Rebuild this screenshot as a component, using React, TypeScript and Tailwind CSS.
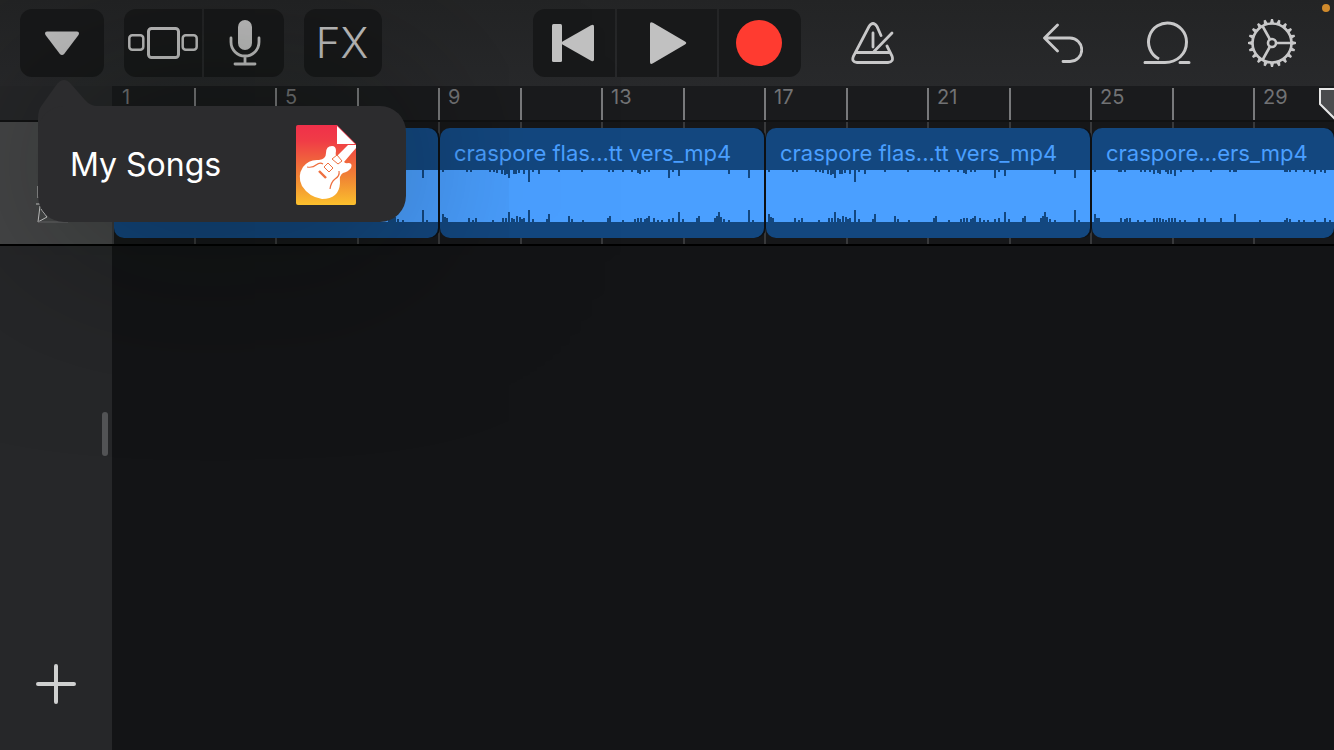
import type { ReactNode } from "react";

type Peak = [x: number, height: number];

type Clip = {
  name?: string;
  grow?: boolean;
  top: Peak[];
  bottom: Peak[];
};

const loopTop: Peak[] = [
  [2, 2], [26, 2], [30, 2], [49, 2], [53, 2], [56, 3], [61, 4], [64, 5], [66, 4], [68, 8],
  [73, 4], [75, 4], [78, 3], [83, 4], [88, 12], [92, 2], [98, 4], [118, 2], [141, 2], [168, 2],
  [172, 2], [182, 2], [191, 2], [197, 3], [199, 4], [204, 2], [208, 2], [228, 8], [232, 2],
  [238, 6], [288, 4], [308, 8],
];

const loopBottom: Peak[] = [
  [2, 8], [4, 5], [6, 4], [28, 4], [32, 2], [35, 4], [52, 2], [62, 4], [65, 4], [68, 10],
  [71, 4], [73, 3], [76, 6], [79, 5], [81, 3], [83, 4], [88, 12], [92, 3], [106, 3], [108, 8],
  [128, 6], [131, 3], [142, 2], [167, 4], [169, 6], [182, 2], [194, 3], [197, 4], [200, 4],
  [204, 3], [206, 4], [208, 6], [213, 4], [217, 2], [221, 2], [228, 3], [232, 4], [238, 10],
  [242, 3], [256, 4], [258, 6], [274, 4], [276, 6], [278, 10], [280, 5], [283, 3], [288, 2],
  [308, 12], [312, 2],
];

const tailTop: Peak[] = [
  [2, 2], [26, 2], [28, 2], [32, 2], [48, 2], [52, 2], [57, 2], [61, 4], [65, 3], [67, 4],
  [73, 2], [75, 4], [78, 4], [82, 6], [88, 2], [100, 2], [118, 2], [137, 2], [141, 2], [143, 2],
  [192, 2], [194, 2], [197, 2], [203, 2], [211, 2], [217, 2], [222, 4], [228, 2], [232, 3],
];

const tailBottom: Peak[] = [
  [2, 8], [4, 4], [6, 4], [28, 4], [32, 3], [34, 4], [37, 4], [45, 2], [52, 2], [61, 4],
  [64, 4], [67, 4], [70, 3], [73, 2], [76, 4], [79, 4], [82, 4], [87, 2], [92, 2], [106, 4],
  [112, 4], [128, 4], [142, 8], [167, 2], [192, 2], [194, 4], [197, 3], [206, 2], [211, 2],
  [222, 2], [232, 4], [237, 2],
];

const clips: Clip[] = [
  { top: loopTop, bottom: loopBottom },
  { name: "craspore flas...tt vers_mp4", top: loopTop, bottom: loopBottom },
  { name: "craspore flas...tt vers_mp4", top: loopTop, bottom: loopBottom },
  { name: "craspore...ers_mp4", grow: true, top: tailTop, bottom: tailBottom },
];

const bars = [1, 5, 9, 13, 17, 21, 25, 29];
const gearTeeth = Array.from({ length: 20 }, (_, i) => i * 18);

function ToolButton({
  label,
  className = "",
  children,
}: {
  label: string;
  className?: string;
  children: ReactNode;
}) {
  return (
    <button
      type="button"
      aria-label={label}
      className={`flex h-[68px] shrink-0 items-center justify-center bg-[#18191a] text-[#c1c1c1] ${className}`}
    >
      {children}
    </button>
  );
}

function Header() {
  return (
    <header className="grid h-[86px] grid-cols-[1fr_auto_1fr] items-center bg-linear-to-b from-[#232425] to-[#28292b]">
      <div className="flex gap-5 pl-5">
        <ToolButton label="Navigation" className="w-[84px] rounded-xl">
          <svg width="36" height="26" viewBox="0 0 36 26" fill="currentColor">
            <path d="M3 1.500h30q3 .5 1.500 3.500L20.500 23.500q-2.500 3-5 0L1.500 5Q0 2 3 1.500z" />
          </svg>
        </ToolButton>

        <div className="flex gap-0.5">
          <ToolButton label="Track view" className="w-[78px] rounded-l-xl">
            <svg width="70" height="32" viewBox="0 0 70 32" fill="none" stroke="currentColor" strokeWidth="2.500">
              <rect x="1.300" y="8.300" width="14" height="14.500" rx="3" />
              <rect x="20.500" y="1.500" width="30" height="29" rx="3" strokeWidth="3" />
              <rect x="54.700" y="8.300" width="14" height="14.500" rx="3" />
            </svg>
          </ToolButton>
          <ToolButton label="Microphone" className="w-[80px] rounded-r-xl pl-0.5">
            <svg width="32" height="46" viewBox="0 0 32 46" fill="none" stroke="currentColor" strokeWidth="2.800" strokeLinecap="round">
              <rect x="9" y="0" width="14" height="30" rx="7" fill="currentColor" stroke="none" />
              <path d="M2 18v4a14 14 0 0 0 28 0v-4M16 36v8M6 44h20" />
            </svg>
          </ToolButton>
        </div>

        <ToolButton
          label="FX"
          className="w-[78px] rounded-xl pr-0.5 text-[42px] leading-none font-light"
        >
          FX
        </ToolButton>
      </div>

      <div className="flex gap-0.5">
        <ToolButton label="Go to beginning" className="w-[82px] rounded-l-xl pr-0.5">
          <svg width="42" height="40" viewBox="0 0 42 40" fill="currentColor">
            <rect x="0" y="1" width="10" height="38" rx="1.500" />
            <path d="M39 2.300Q42 .8 42 3.500v33q0 2.700-3 1.200L10.500 21.500q-2-1.500 0-3z" />
          </svg>
        </ToolButton>
        <ToolButton label="Play" className="w-[100px] pl-0.5">
          <svg width="38" height="42" viewBox="0 0 38 42" fill="currentColor">
            <path d="M1 2Q1-1 4 .8L36 19.500q2.500 1.500 0 3L4 41.200Q1 43 1 40z" />
          </svg>
        </ToolButton>
        <ToolButton label="Record" className="w-[82px] rounded-r-xl pr-0.5">
          <span className="size-[46px] rounded-full bg-[#ff3b30]" />
        </ToolButton>
      </div>

      <div className="flex items-center justify-between pr-[38px] pl-[50px] text-[#c8c8c9]">
        <button type="button" aria-label="Metronome">
          <svg width="44" height="42" viewBox="0 0 44 42" fill="none" stroke="currentColor" strokeWidth="2.800" strokeLinecap="round">
            <path d="M30 13.500 26 4.500Q22-1.500 18 4.500L2.500 34Q0 40 6 40.500h31q6-.5 4-6.500L36 24" />
            <path d="M5 30.500h33M22 11v14M23 29.500 41 11" />
          </svg>
        </button>
        <div className="flex items-center">
          <button type="button" aria-label="Undo" className="mr-[60px]">
            <svg width="40" height="40" viewBox="0 0 40 40" fill="none" stroke="currentColor" strokeWidth="2.800" strokeLinecap="round" strokeLinejoin="round">
              <path d="M14.500 2 1.500 15l13 13M2 15h25a11.500 11.500 0 0 1 0 23.500h-7" />
            </svg>
          </button>
          <button type="button" aria-label="Loop browser" className="mr-[57px]">
            <svg width="48" height="44" viewBox="0 0 48 44" fill="none" stroke="currentColor" strokeWidth="3">
              <path d="M1.500 41.500H22C34 41.500 43.500 33 43.500 21A19 19 0 1 0 16 38" />
              <path d="M2 41.500h14M37 41.500h9" strokeLinecap="round" />
            </svg>
          </button>
          <button type="button" aria-label="Settings">
            <svg width="48" height="48" viewBox="0 0 48 48" fill="none" stroke="currentColor" strokeWidth="2.600">
              <circle cx="24" cy="24" r="19.500" />
              <circle cx="24" cy="24" r="4" />
              <path d="M28 24h15M22 20.500 14.500 7M22 27.500 14.500 41" />
              {gearTeeth.map((angle) => (
                <path key={angle} d="M43 22h1l4 1v2l-4 1h-1z" fill="currentColor" stroke="none" transform={`rotate(${angle} 24 24)`} />
              ))}
            </svg>
          </button>
        </div>
      </div>
    </header>
  );
}

function Waveform({ top, bottom }: { top: Peak[]; bottom: Peak[] }) {
  return (
    <svg className="h-[52px] w-full bg-[#4a9fff]" fill="#13477f" aria-hidden="true">
      {top.map(([x, height]) => (
        <rect key={`t${x}`} x={x} y="0" width="2" height={height} />
      ))}
      {bottom.map(([x, height]) => (
        <rect key={`b${x}`} x={x} y={52 - height} width="2" height={height} />
      ))}
    </svg>
  );
}

function Ruler() {
  return (
    <div className="relative flex h-9 overflow-hidden border-b-2 border-[#111213] bg-[#1a1b1d] pt-0.5">
      {bars.map((bar) => (
        <div key={bar} className="flex w-[163px] shrink-0">
          <span
            className={`w-[82px] border-l-2 pl-2 text-[20px] leading-[18px] text-[#717274] ${
              bar === 1 ? "border-transparent" : "border-[#78797b]"
            }`}
          >
            {bar}
          </span>
          <span className="w-[81px] border-l-2 border-[#78797b]" />
        </div>
      ))}
      {/* End of song marker */}
      <svg className="absolute top-0.5 right-0 bg-[#1a1b1d]" width="15" height="32" viewBox="0 0 15 32">
        <path d="M1 1h28v15L15 30 1 16z" fill="#4a4b4d" stroke="#e6e6e6" strokeWidth="2" />
      </svg>
    </div>
  );
}

function Timeline() {
  return (
    <main className="flex min-w-0 grow flex-col bg-[#131416]">
      <Ruler />
      <div className="flex h-[124px] gap-0.5 overflow-hidden border-b-2 border-black bg-[#161719] bg-[repeating-linear-gradient(90deg,#38393b_0_2px,transparent_2px_82px,#38393b_82px_84px,transparent_84px_163px)] py-1.5 pl-0.5">
        {clips.map((clip, i) => (
          <section
            key={i}
            className={`flex h-[110px] flex-col overflow-hidden rounded-[10px] bg-[#13477f] shadow-[2px_0_0_#0d1014] ${
              clip.grow ? "min-w-0 grow" : "w-[324px] shrink-0"
            }`}
          >
            <h2 className="h-[42px] pt-[11px] pl-3.5 text-[22px] leading-7 whitespace-nowrap text-[#4a9fff]">
              {clip.name}
            </h2>
            <Waveform top={clip.top} bottom={clip.bottom} />
          </section>
        ))}
      </div>
    </main>
  );
}

function Sidebar() {
  return (
    <aside className="relative flex w-28 shrink-0 flex-col bg-[#262729]">
      <div className="h-9 border-b-2 border-[#111213]" />
      <div className="flex h-[124px] items-end border-b-2 border-black bg-[#464748] pb-5 pl-9">
        <svg width="36" height="42" viewBox="0 0 36 42" fill="none" stroke="#d0d0d0" strokeWidth="1">
          <path d="M2 4v12M0 22h4M2 40 4 24M2 40l9-5-6-8" />
          <path d="M2 40h30" stroke="#6a6b6c" />
        </svg>
      </div>
      <div className="absolute top-[326px] right-1 h-11 w-1.5 rounded-full bg-[#535456]" />
      <button type="button" aria-label="Add track" className="mx-auto mt-auto mb-[46px] text-[#cfd0d0]">
        <svg width="40" height="40" viewBox="0 0 40 40" stroke="currentColor" strokeWidth="4" strokeLinecap="round">
          <path d="M20 2v36M2 20h36" />
        </svg>
      </button>
    </aside>
  );
}

function SongIcon() {
  return (
    <svg width="60" height="80" viewBox="0 0 60 80" aria-hidden="true">
      <defs>
        <linearGradient id="page" x1="0" y1="0" x2="0" y2="1">
          <stop offset="0" stopColor="#f0304a" />
          <stop offset=".2" stopColor="#f03c46" />
          <stop offset=".65" stopColor="#f08434" />
          <stop offset="1" stopColor="#fbc02d" />
        </linearGradient>
      </defs>
      <path d="M2 0h39l19 19v59q0 2-2 2H2q-2 0-2-2V2q0-2 2-2z" fill="url(#page)" />
      <path d="M41 1v18h18z" fill="#fff" />
      <path
        d="M30 28Q30 21 36 21q4 0 4 5-1 5 1 5L52 20h8v3L48 37q2 2 4 1 5 0 3 5-3 4-8 5-4 2-3 10-1 16-18 16Q13 72 6 61 1 51 7 42q6-8 16-7 7-1 7-7z"
        fill="#fff"
      />
      <g fill="none" stroke="#ee7040" strokeWidth="1">
        <path d="m41 30 5 6-4 3-6-5zM32 38l5 5-4 4-5-5z" />
        <path d="M23 46l7 7" strokeWidth="2.400" />
        <path d="M11 42q6 1 9-2 4-3 7-1M43 46q1 5-4 8-4 3-5 10" strokeWidth="1.200" />
      </g>
    </svg>
  );
}

function SongsPopover() {
  return (
    <div className="absolute top-[106px] left-[38px] w-[368px] rounded-[26px] shadow-[0_0_200px_rgba(0,8,4,0.600)]">
      <svg className="absolute -top-[26px] left-0 text-[#2c2c2e]" width="64" height="54" viewBox="0 0 64 54" fill="currentColor">
        <path d="M0 54V38q0-8 4-13L19 4q7-8 14 0l14 16q5 6 13 6l4 28z" />
      </svg>
      <button
        type="button"
        className="relative flex h-[116px] w-full items-center justify-between rounded-[26px] bg-[#2c2c2e] pt-0.5 pr-[50px] pl-8 text-[32px] text-white"
      >
        My Songs
        <SongIcon />
      </button>
    </div>
  );
}

export default function App() {
  return (
    <div className="relative flex min-h-dvh flex-col overflow-hidden bg-[#131416] font-['Inter','Liberation_Sans',sans-serif]">
      <Header />
      <div className="flex grow">
        <Sidebar />
        <Timeline />
      </div>
      <SongsPopover />
      {/* Microphone in use */}
      <span className="absolute top-1 right-1 size-2 rounded-full bg-[#d08a2c]" />
    </div>
  );
}
